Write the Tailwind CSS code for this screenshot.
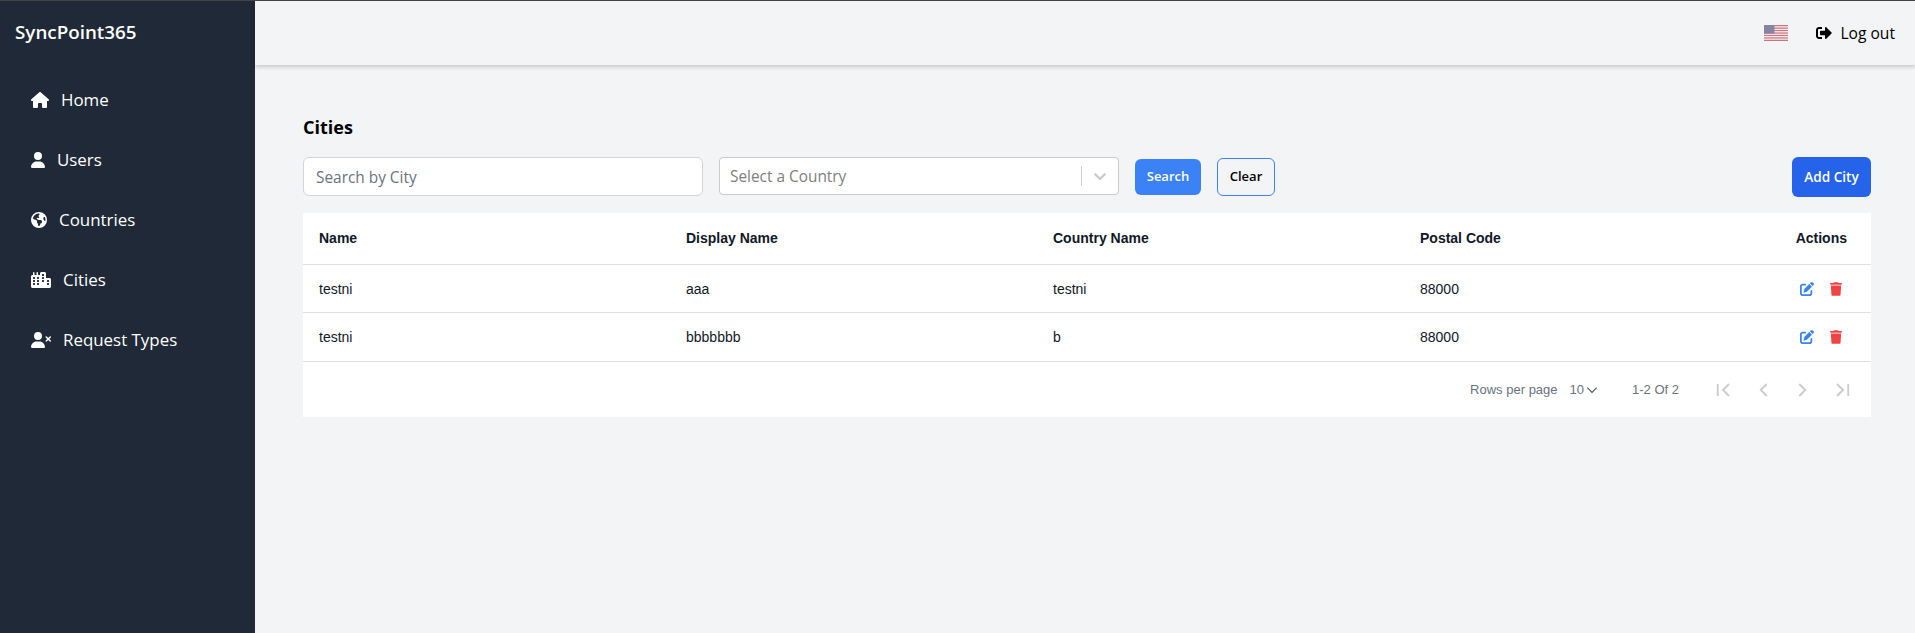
<!DOCTYPE html>
<html lang="en">
<head>
    <meta charset="UTF-8">
    <title>Cities</title>
    <script src="https://cdn.jsdelivr.net/npm/@tailwindcss/browser@4"></script>
</head>
<body class="bg-[#f3f4f6] font-['Open_Sans',sans-serif] h-[633px] overflow-hidden">
    <div class="flex h-[633px] border-t border-[#444]">
        <!-- Sidebar -->
        <aside class="w-[255px] shrink-0 bg-[#1f2937] text-white">
            <div class="pl-[15px] pt-[18px] h-[69px] text-[18.8px] leading-[26px] font-semibold">SyncPoint365</div>
            <nav class="flex flex-col pl-[31px] text-[16.9px]">
                <a class="flex items-center h-[60px] gap-3">
                    <svg class="w-[18px] h-4 fill-white" viewBox="0 0 576 512"><path d="M575.8 255.5c0 18-15 32.1-32 32.1h-32l.7 160.2c0 2.7-.2 5.4-.5 8.1V472c0 22.1-17.9 40-40 40H456c-1.1 0-2.2 0-3.3-.1c-1.4 .1-2.8 .1-4.2 .1H416 392c-22.1 0-40-17.9-40-40V448 384c0-17.7-14.3-32-32-32H256c-17.7 0-32 14.3-32 32v64 24c0 22.1-17.9 40-40 40H160 128.1c-1.5 0-3-.1-4.5-.2c-1.2 .1-2.4 .2-3.6 .2H104c-22.1 0-40-17.9-40-40V360c0-.9 0-1.9 .1-2.8V287.6H32c-18 0-32-14-32-32.1c0-9 3-17 10-24L266.4 8c7-7 15-8 22-8s15 2 21 7L564.8 231.5c8 7 12 15 11 24z"/></svg>
                    <span>Home</span>
                </a>
                <a class="flex items-center h-[60px] gap-3">
                    <svg class="w-[14px] h-4 fill-white" viewBox="0 0 448 512"><path d="M224 256A128 128 0 1 0 224 0a128 128 0 1 0 0 256zm-45.7 48C79.8 304 0 383.8 0 482.3C0 498.7 13.3 512 29.7 512H418.3c16.4 0 29.7-13.3 29.7-29.7C448 383.8 368.2 304 269.7 304H178.3z"/></svg>
                    <span>Users</span>
                </a>
                <a class="flex items-center h-[60px] gap-3">
                    <svg class="w-4 h-4 fill-white" viewBox="0 0 512 512"><path d="M57.7 193l9.4 16.4c8.3 14.5 21.9 25.2 38 29.8L163 255.7c17.2 4.9 29 20.6 29 38.5v39.9c0 11 6.2 21 16 25.9s16 14.9 16 25.9v39c0 15.6 14.9 26.9 29.9 22.6c16.1-4.6 28.6-17.5 32.7-33.8l2.8-11.2c4.2-16.9 15.2-31.4 30.3-40l8.1-4.6c15-8.5 24.2-24.5 24.2-41.7v-8.3c0-12.7-5.1-24.9-14.1-33.9l-3.9-3.9c-9-9-21.2-14.1-33.9-14.1H257c-11.1 0-22.1-2.9-31.8-8.4l-34.5-19.7c-4.3-2.5-7.6-6.5-9.2-11.2c-3.2-9.6 1.1-20 10.2-24.5l5.9-3c6.6-3.3 14.3-3.9 21.3-1.5l23.2 7.7c8.2 2.7 17.2-.4 21.9-7.5c4.7-7 4.2-16.3-1.2-22.8l-13.6-16.3c-10-12-9.9-29.5 .3-41.3l15.7-18.3c8.8-10.3 10.2-25 3.5-36.7l-2.4-4.2c-3.5-.2-6.9-.3-10.4-.3C163.1 48 84.4 108.9 57.7 193zM464 256c0-36.8-9.6-71.4-26.4-101.5L412 164.8c-15.7 6.3-23.8 23.8-18.5 39.8l16.9 50.7c3.5 10.4 12 18.3 22.6 20.9l29.1 7.3c1.2-9 1.8-18.2 1.8-27.5zM0 256a256 256 0 1 1 512 0A256 256 0 1 1 0 256z"/></svg>
                    <span>Countries</span>
                </a>
                <a class="flex items-center h-[60px] gap-3">
                    <svg class="w-5 h-4 fill-white" viewBox="0 0 640 512"><path d="M480 48c0-26.5-21.5-48-48-48H336c-26.5 0-48 21.5-48 48V96H224V24c0-13.3-10.7-24-24-24s-24 10.7-24 24V96H112V24c0-13.3-10.7-24-24-24S64 10.7 64 24V96H48C21.5 96 0 117.5 0 144v96V464c0 26.5 21.5 48 48 48H304h32 96H592c26.5 0 48-21.5 48-48V240c0-26.5-21.5-48-48-48H480V48zm96 320v32c0 8.8-7.2 16-16 16H528c-8.8 0-16-7.2-16-16V368c0-8.8 7.2-16 16-16h32c8.8 0 16 7.2 16 16zM240 416H208c-8.8 0-16-7.2-16-16V368c0-8.8 7.2-16 16-16h32c8.8 0 16 7.2 16 16v32c0 8.8-7.2 16-16 16zM128 400c0 8.8-7.2 16-16 16H80c-8.8 0-16-7.2-16-16V368c0-8.8 7.2-16 16-16h32c8.8 0 16 7.2 16 16v32zM560 256c8.8 0 16 7.2 16 16v32c0 8.8-7.2 16-16 16H528c-8.8 0-16-7.2-16-16V272c0-8.8 7.2-16 16-16h32zM256 176v32c0 8.8-7.2 16-16 16H208c-8.8 0-16-7.2-16-16V176c0-8.8 7.2-16 16-16h32c8.8 0 16 7.2 16 16zM112 160c8.8 0 16 7.2 16 16v32c0 8.8-7.2 16-16 16H80c-8.8 0-16-7.2-16-16V176c0-8.8 7.2-16 16-16h32zM256 304c0 8.8-7.2 16-16 16H208c-8.8 0-16-7.2-16-16V272c0-8.8 7.2-16 16-16h32c8.8 0 16 7.2 16 16v32c0 8.8-7.2 16-16 16zM112 320H80c-8.8 0-16-7.2-16-16V272c0-8.8 7.2-16 16-16h32c8.8 0 16 7.2 16 16v32c0 8.8-7.2 16-16 16zm304-48v32c0 8.8-7.2 16-16 16H368c-8.8 0-16-7.2-16-16V272c0-8.8 7.2-16 16-16h32c8.8 0 16 7.2 16 16zM368 64h32c8.8 0 16 7.2 16 16v32c0 8.8-7.2 16-16 16H368c-8.8 0-16-7.2-16-16V80c0-8.8 7.2-16 16-16zm48 112v32c0 8.8-7.2 16-16 16H368c-8.8 0-16-7.2-16-16V176c0-8.8 7.2-16 16-16h32c8.8 0 16 7.2 16 16z"/></svg>
                    <span>Cities</span>
                </a>
                <a class="flex items-center h-[60px] gap-3">
                    <svg class="w-5 h-4 fill-white" viewBox="0 0 640 512"><path d="M96 128a128 128 0 1 1 256 0A128 128 0 1 1 96 128zM0 482.3C0 383.8 79.8 304 178.3 304h91.4C368.2 304 448 383.8 448 482.3c0 16.4-13.3 29.7-29.7 29.7H29.7C13.3 512 0 498.7 0 482.3zM471 143c9.4-9.4 24.6-9.4 33.9 0l47 47 47-47c9.4-9.4 24.6-9.4 33.9 0s9.4 24.6 0 33.9l-47 47 47 47c9.4 9.4 9.4 24.6 0 33.9s-24.6 9.4-33.9 0l-47-47-47 47c-9.4 9.4-24.6 9.4-33.9 0s-9.4-24.6 0-33.9l47-47-47-47c-9.4-9.4-9.4-24.6 0-33.9z"/></svg>
                    <span>Request Types</span>
                </a>
            </nav>
        </aside>

        <div class="flex-1 min-w-0">
            <!-- Top bar -->
            <header class="h-[64px] flex items-center justify-end pr-[20px] shadow-[0_2px_4px_rgba(0,0,0,0.18)]">
                <svg class="w-6 h-4 opacity-60 mr-[28px]" viewBox="0 0 24 16">
                    <rect width="24" height="16" fill="#fff"/>
                    <g fill="#b22234">
                        <rect y="0" width="24" height="1.3"/><rect y="2.5" width="24" height="1.3"/><rect y="4.9" width="24" height="1.3"/><rect y="7.4" width="24" height="1.3"/><rect y="9.8" width="24" height="1.3"/><rect y="12.3" width="24" height="1.3"/><rect y="14.7" width="24" height="1.3"/>
                    </g>
                    <rect width="10.5" height="8.6" fill="#3c3b6e"/>
                </svg>
                <svg class="w-4 h-4 mr-[8px]" viewBox="0 0 512 512"><path d="M497 273L329 441c-15 15-41 4.5-41-17v-96H152c-13.3 0-24-10.7-24-24v-96c0-13.3 10.7-24 24-24h136V88c0-21.4 25.9-32 41-17l168 168c9.3 9.4 9.3 24.6 0 34zM192 436v-40c0-6.6-5.4-12-12-12H96c-17.7 0-32-14.3-32-32V160c0-17.7 14.3-32 32-32h84c6.6 0 12-5.4 12-12V76c0-6.6-5.4-12-12-12H96c-53 0-96 43-96 96v192c0 53 43 96 96 96h84c6.6 0 12-5.4 12-12z"/></svg>
                <span class="pt-[2px] text-[15.6px] text-black">Log out</span>
            </header>

            <main class="pl-[48px] pr-[44px]">
                <h1 class="pt-[49px] text-[18px] leading-[26px] font-bold text-black">Cities</h1>

                <!-- Filters -->
                <div class="flex items-start mt-[17px] h-[40px]">
                    <input class="w-[400px] h-[39px] bg-white border border-[#d1d5db] rounded-[6px] px-3 pt-[2px] text-[15.4px] placeholder:text-[#6b7280]" placeholder="Search by City">
                    <div class="w-[400px] h-[38px] ml-[16px] bg-white border border-[#ccc] rounded-[4px] flex items-center pl-[10px] text-[15.4px] leading-[24px] text-[#808080]">
                        <span class="flex-1 pt-[2px]">Select a Country</span>
                        <span class="w-px h-5 bg-[#ccc]"></span>
                        <svg class="w-5 h-5 mx-2 fill-[#ccc]" viewBox="0 0 20 20"><path d="M4.516 7.548c.436-.446 1.043-.481 1.576 0L10 11.295l3.908-3.747c.533-.481 1.141-.446 1.574 0 .436.445.408 1.197 0 1.615-.406.418-4.695 4.502-4.695 4.502a1.095 1.095 0 0 1-1.576 0S4.924 9.581 4.516 9.163c-.409-.418-.436-1.17 0-1.615z"/></svg>
                    </div>
                    <button class="w-[66px] h-[36px] mt-[2px] ml-[16px] bg-[#3b82f6] text-white rounded-[6px] text-[13px] font-semibold">Search</button>
                    <button class="w-[58px] h-[38px] mt-[1px] ml-[16px] border border-[#3b82f6] rounded-[6px] text-[13px] font-semibold text-black">Clear</button>
                    <button class="w-[79px] h-[40px] ml-auto bg-[#2563eb] text-white rounded-[6px] text-[13.6px] font-semibold">Add City</button>
                </div>

                <!-- Table -->
                <div class="mt-[16px] bg-white font-['Liberation_Sans',sans-serif] text-[14px] text-[#111827]">
                    <div class="grid grid-cols-[367px_367px_367px_367px_100px] items-center h-[52px] border-b border-[#e0e0e0] font-bold">
                        <div class="pl-4">Name</div>
                        <div class="pl-4">Display Name</div>
                        <div class="pl-4">Country Name</div>
                        <div class="pl-4">Postal Code</div>
                        <div class="pr-6 text-right">Actions</div>
                    </div>
                    <div class="grid grid-cols-[367px_367px_367px_367px_100px] items-center h-[48px] pt-px border-b border-[#e0e0e0]">
                        <div class="pl-4">testni</div>
                        <div class="pl-4">aaa</div>
                        <div class="pl-4">testni</div>
                        <div class="pl-4">88000</div>
                        <div class="flex justify-end items-center gap-4 pr-[29px]">
                            <svg class="w-[14px] h-[14px] fill-[#3b82f6]" viewBox="0 0 512 512"><path d="M471.6 21.7c-21.9-21.9-57.3-21.9-79.2 0L362.3 51.7l97.9 97.9 30.1-30.1c21.9-21.9 21.9-57.3 0-79.2L471.6 21.7zm-299.2 220c-6.1 6.1-10.8 13.6-13.5 21.9l-29.6 88.8c-2.9 8.6-.6 18.1 5.8 24.6s15.9 8.7 24.6 5.8l88.8-29.6c8.2-2.7 15.7-7.4 21.9-13.5L437.7 172.3 339.7 74.3 172.4 241.7zM96 64C43 64 0 107 0 160V416c0 53 43 96 96 96H352c53 0 96-43 96-96V320c0-17.7-14.3-32-32-32s-32 14.3-32 32v96c0 17.7-14.3 32-32 32H96c-17.7 0-32-14.3-32-32V160c0-17.7 14.3-32 32-32h96c17.7 0 32-14.3 32-32s-14.3-32-32-32H96z"/></svg>
                            <svg class="w-3 h-[14px] fill-[#ef4444]" viewBox="0 0 448 512"><path d="M135.2 17.7L128 32H32C14.3 32 0 46.3 0 64S14.3 96 32 96H416c17.7 0 32-14.3 32-32s-14.3-32-32-32H320l-7.2-14.3C307.4 6.8 296.3 0 284.2 0H163.8c-12.1 0-23.2 6.8-28.6 17.7zM416 128H32L53.2 467c1.6 25.3 22.6 45 47.9 45H346.9c25.3 0 46.3-19.7 47.9-45L416 128z"/></svg>
                        </div>
                    </div>
                    <div class="grid grid-cols-[367px_367px_367px_367px_100px] items-center h-[49px] border-b border-[#e0e0e0]">
                        <div class="pl-4">testni</div>
                        <div class="pl-4">bbbbbbb</div>
                        <div class="pl-4">b</div>
                        <div class="pl-4">88000</div>
                        <div class="flex justify-end items-center gap-4 pr-[29px]">
                            <svg class="w-[14px] h-[14px] fill-[#3b82f6]" viewBox="0 0 512 512"><path d="M471.6 21.7c-21.9-21.9-57.3-21.9-79.2 0L362.3 51.7l97.9 97.9 30.1-30.1c21.9-21.9 21.9-57.3 0-79.2L471.6 21.7zm-299.2 220c-6.1 6.1-10.8 13.6-13.5 21.9l-29.6 88.8c-2.9 8.6-.6 18.1 5.8 24.6s15.9 8.7 24.6 5.8l88.8-29.6c8.2-2.7 15.7-7.4 21.9-13.5L437.7 172.3 339.7 74.3 172.4 241.7zM96 64C43 64 0 107 0 160V416c0 53 43 96 96 96H352c53 0 96-43 96-96V320c0-17.7-14.3-32-32-32s-32 14.3-32 32v96c0 17.7-14.3 32-32 32H96c-17.7 0-32-14.3-32-32V160c0-17.7 14.3-32 32-32h96c17.7 0 32-14.3 32-32s-14.3-32-32-32H96z"/></svg>
                            <svg class="w-3 h-[14px] fill-[#ef4444]" viewBox="0 0 448 512"><path d="M135.2 17.7L128 32H32C14.3 32 0 46.3 0 64S14.3 96 32 96H416c17.7 0 32-14.3 32-32s-14.3-32-32-32H320l-7.2-14.3C307.4 6.8 296.3 0 284.2 0H163.8c-12.1 0-23.2 6.8-28.6 17.7zM416 128H32L53.2 467c1.6 25.3 22.6 45 47.9 45H346.9c25.3 0 46.3-19.7 47.9-45L416 128z"/></svg>
                        </div>
                    </div>
                    <!-- Pagination -->
                    <div class="flex items-center justify-end h-[55px] text-[13px] text-[#6b7280] pr-[19px]">
                        <span>Rows per page</span>
                        <span class="ml-3">10</span>
                        <svg class="w-[14px] h-[14px] ml-[1px] stroke-[#4b5563] fill-none" stroke-width="2" viewBox="0 0 24 24"><path d="M4 8l8 8 8-8"/></svg>
                        <span class="ml-[33px]">1-2 Of 2</span>
                        <div class="flex items-center gap-[22px] ml-[35px] stroke-[#ccc] fill-none">
                            <svg class="w-[18px] h-[18px]" stroke-width="2.5" viewBox="0 0 24 24"><path d="M5 4v16M20 4l-8 8 8 8"/></svg>
                            <svg class="w-[18px] h-[18px]" stroke-width="2.5" viewBox="0 0 24 24"><path d="M17 4l-8 8 8 8"/></svg>
                            <svg class="w-[18px] h-[18px]" stroke-width="2.5" viewBox="0 0 24 24"><path d="M7 4l8 8-8 8"/></svg>
                            <svg class="w-[18px] h-[18px]" stroke-width="2.5" viewBox="0 0 24 24"><path d="M4 4l8 8-8 8M19 4v16"/></svg>
                        </div>
                    </div>
                </div>
            </main>
        </div>
    </div>
</body>
</html>
